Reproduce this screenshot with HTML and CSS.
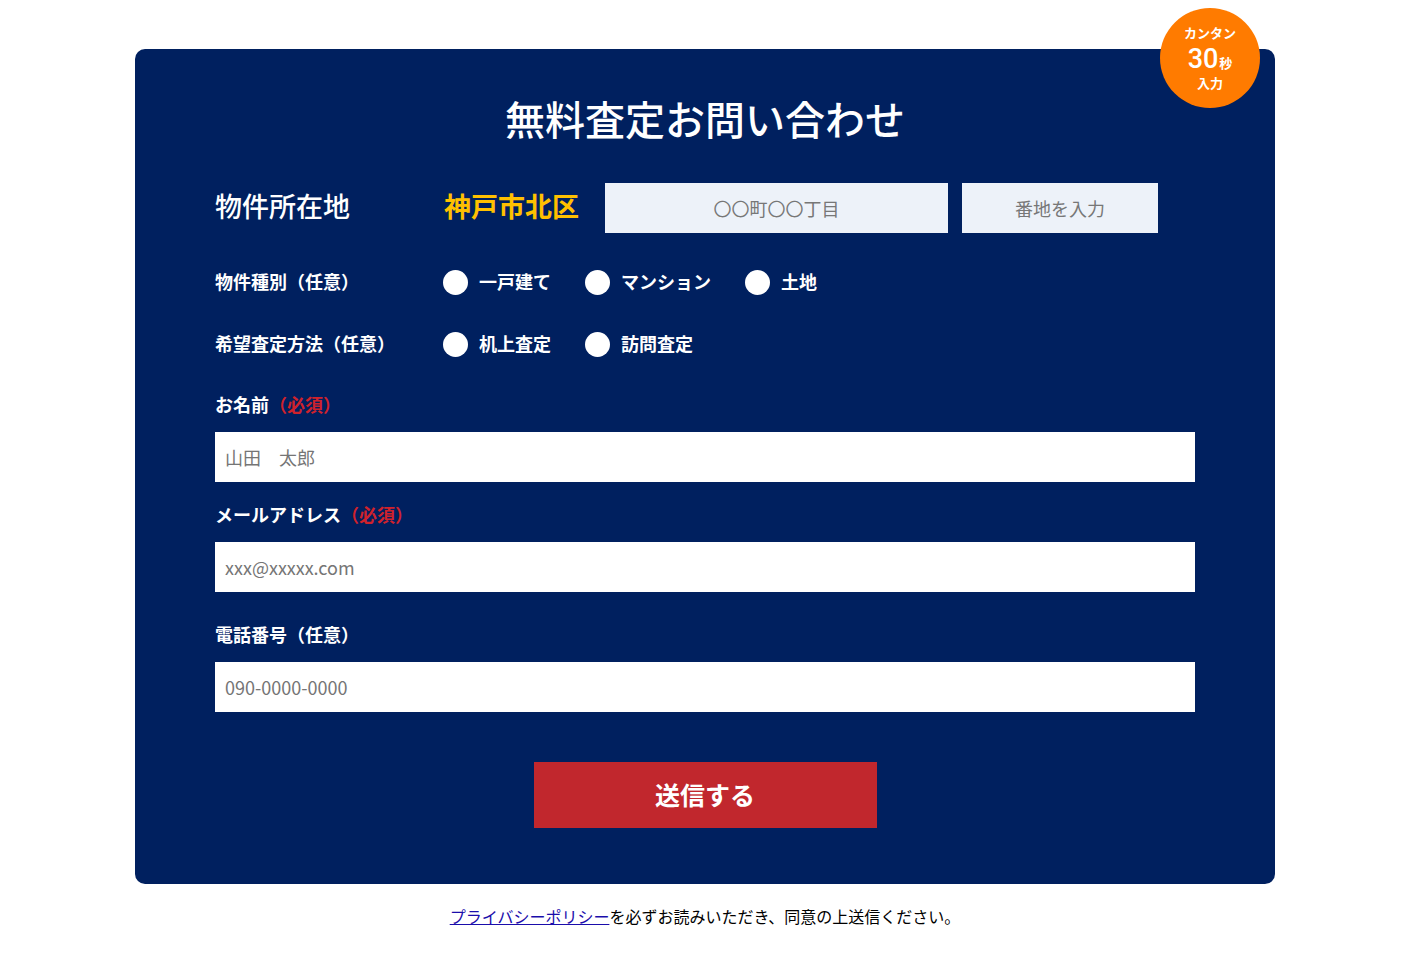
FILE: index.html
```html
<!DOCTYPE html>
<html lang="ja">
<head>
<meta charset="utf-8">
<title>無料査定お問い合わせ</title>
<link rel="stylesheet" href="styles.css">
</head>
<body>
<div class="card">
  <div class="badge">
    <span class="b-top">カンタン</span>
    <span class="b-mid"><span class="b-num">30</span><span class="b-sec">秒</span></span>
    <span class="b-bot">入力</span>
  </div>
  <h1 class="title">無料査定お問い合わせ</h1>

  <div class="row-addr">
    <div class="addr-label">物件所在地</div>
    <div class="addr-city">神戸市北区</div>
    <input class="addr-in addr-town" type="text" placeholder="〇〇町〇〇丁目">
    <input class="addr-in addr-num" type="text" placeholder="番地を入力">
  </div>

  <div class="row-radio r1">
    <div class="radio-label">物件種別（任意）</div>
    <div class="opts">
      <label class="opt"><span class="dot"></span><span class="opt-t">一戸建て</span></label>
      <label class="opt"><span class="dot"></span><span class="opt-t">マンション</span></label>
      <label class="opt"><span class="dot"></span><span class="opt-t">土地</span></label>
    </div>
  </div>

  <div class="row-radio r2">
    <div class="radio-label">希望査定方法（任意）</div>
    <div class="opts">
      <label class="opt"><span class="dot"></span><span class="opt-t">机上査定</span></label>
      <label class="opt"><span class="dot"></span><span class="opt-t">訪問査定</span></label>
    </div>
  </div>

  <div class="field f-name">
    <div class="f-label">お名前<span class="req">（必須）</span></div>
    <input class="f-in" type="text" placeholder="山田　太郎">
  </div>
  <div class="field f-mail">
    <div class="f-label">メールアドレス<span class="req">（必須）</span></div>
    <input class="f-in" type="text" placeholder="xxx@xxxxx.com">
  </div>
  <div class="field f-tel">
    <div class="f-label">電話番号（任意）</div>
    <input class="f-in" type="text" placeholder="090-0000-0000">
  </div>

  <div class="btn-wrap"><button class="submit" type="button">送信する</button></div>
</div>
<p class="note"><a href="#" class="policy">プライバシーポリシー</a>を必ずお読みいただき、同意の上送信ください。</p>
</body>
</html>
```

FILE: styles.css
```css
* { box-sizing: border-box; }
body {
  margin: 0;
  padding-left: 2px;
  background: #fff;
  font-family: "Noto Sans CJK JP", "Noto Sans", sans-serif;
  color: #000;
}
.card {
  position: relative;
  width: 1140px;
  margin: 49px auto 0;
  background: #00205f;
  border-radius: 10px;
  padding: 49px 80px 56px 80px;
  color: #fff;
}
.badge {
  position: absolute;
  top: -41px;
  right: 15px;
  width: 100px;
  height: 100px;
  border-radius: 50%;
  background: #ff7b00;
  display: flex;
  flex-direction: column;
  align-items: center;
  justify-content: center;
  color: #fff;
  font-weight: 700;
  font-family: Lato, "Noto Sans CJK JP", sans-serif;
}
.b-top { font-size: 13px; line-height: 14px; height: 14px; }
.b-mid { display: flex; align-items: baseline; line-height: 26px; height: 26px; margin-top: 6px; }
.b-num { font-family: Roboto, sans-serif; font-size: 27px; font-weight: 500; }
.b-sec { font-size: 13px; margin-left: 1px; }
.b-bot { font-size: 13px; line-height: 14px; height: 14px; margin-top: 4px; }
.title {
  margin: 0;
  text-align: center;
  font-size: 40px;
  line-height: 40px;
  font-weight: 500;
}
.row-addr {
  display: flex;
  align-items: center;
  margin-top: 45px;
  height: 50px;
}
.addr-label {
  width: 229px;
  font-size: 27px;
  font-weight: 500;
  padding-bottom: 6px;
}
.addr-city {
  font-size: 27px;
  font-weight: 700;
  color: #ffc000;
  margin-right: 26px;
  padding-bottom: 6px;
}
.addr-in {
  height: 50px;
  border: none;
  background: #edf2f9;
  font-family: inherit;
  font-size: 18px;
  text-align: center;
  outline: none;
}
.addr-in::placeholder { color: #777; }
.addr-town { width: 343px; margin-right: 14px; }
.addr-num { width: 196px; }
.row-radio {
  display: flex;
  align-items: center;
  height: 25px;
  margin-top: 37px;
}
.radio-label {
  width: 228px;
  font-size: 18px;
  font-weight: 700;
  padding-bottom: 3px;
}
.opts { display: flex; gap: 34px; }
.opt {
  display: flex;
  align-items: center;
  gap: 11px;
  font-size: 18px;
  font-weight: 700;
}
.opt-t { padding-bottom: 3px; }
.dot {
  width: 25px;
  height: 25px;
  border-radius: 50%;
  background: #fff;
}
.field { display: flex; flex-direction: column; }
.f-name { margin-top: 36px; }
.f-mail { margin-top: 21px; }
.f-tel { margin-top: 31px; }
.f-label {
  font-size: 18px;
  line-height: 26px;
  font-weight: 700;
  margin-bottom: 13px;
  padding-bottom: 2px;
  margin-top: -2px;
}
.req { color: #d0222c; }
.f-in {
  width: 980px;
  height: 50px;
  border: none;
  background: #fff;
  padding: 0 10px;
  font-family: inherit;
  font-size: 18px;
  outline: none;
}
.f-in::placeholder { color: #757575; }
.btn-wrap { display: flex; justify-content: center; margin-top: 50px; }
.submit {
  width: 343px;
  height: 66px;
  border: none;
  background: #c1272d;
  color: #fff;
  font-family: inherit;
  font-size: 25px;
  font-weight: 700;
  padding-bottom: 3px;
}
.note {
  margin: 20px 0 0;
  text-align: center;
  font-size: 16px;
  line-height: 24px;
}
.policy { color: #1a0dab; }
```
